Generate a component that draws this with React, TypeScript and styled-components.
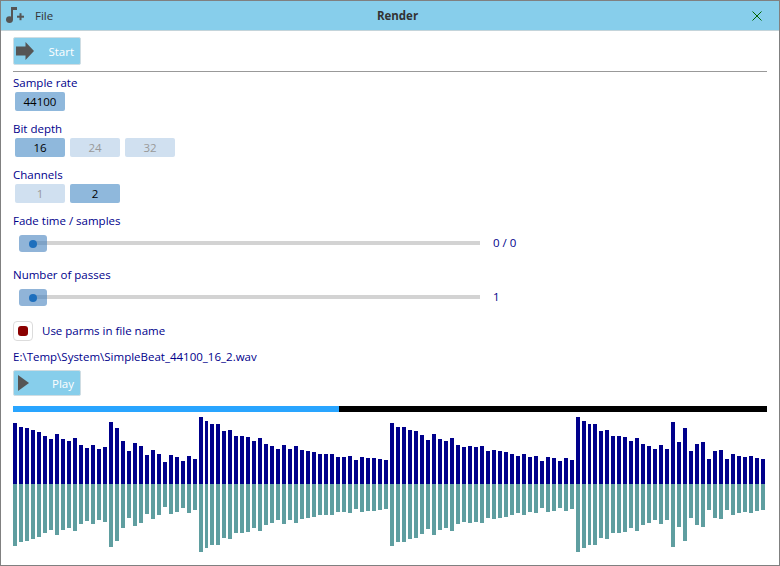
import styled, { createGlobalStyle } from 'styled-components'

const GlobalStyle = createGlobalStyle`
  html, body {
    margin: 0;
    padding: 0;
    background: #fff;
  }

  body {
    font-family: 'Open Sans', 'Noto Sans', sans-serif;
    font-size: 11.5px;
  }
`

const Window = styled.div`
  width: 780px;
  height: 566px;
  box-sizing: border-box;
  border: 1px solid #808080;
  background: #fff;
  overflow: hidden;
`

const TitleBar = styled.header`
  display: flex;
  align-items: center;
  height: 29px;
  padding: 0 17px 0 4px;
  background: #87ceeb;
  border-bottom: 1px solid #c4d4da;
  color: #333;
`

const MenuLabel = styled.span`
  margin-left: 10px;
  width: 40px;
`

const Title = styled.span`
  flex: 1;
  padding-right: 32px;
  text-align: center;
  font-weight: 700;
  color: #333;
`

const Content = styled.main`
  padding: 6px 12px 0;
`

const ActionButton = styled.button`
  display: flex;
  align-items: center;
  justify-content: space-between;
  width: 68px;
  height: ${({ $tall }: { $tall?: boolean }) => ($tall ? 28 : 26)}px;
  padding: 0 6px 0 2px;
  box-sizing: border-box;
  border: 1px solid #cfdde3;
  border-radius: 2px;
  background: #87ceeb;
  color: #fff;
  font: inherit;
`

const Divider = styled.hr`
  height: 1px;
  margin: 6px 0 3px;
  border: 0;
  background: #999;
`

const Section = styled.section`
  height: 46px;
`

const SliderSection = styled.section`
  height: 54px;
`

const Label = styled.div`
  height: 17px;
  line-height: 15px;
  color: #00008b;
`

const OptionRow = styled.div`
  display: flex;
  gap: 5px;
  padding-left: 2px;
`

const Option = styled.span<{ $active?: boolean }>`
  width: 50px;
  height: 19px;
  line-height: 19px;
  border-radius: 2px;
  text-align: center;
  background: ${({ $active }) => ($active ? '#8fb8dc' : '#d0e0f0')};
  color: ${({ $active }) => ($active ? '#000' : '#999')};
`

const SliderRow = styled.div`
  display: flex;
  align-items: center;
  height: 18px;
  margin-top: 4px;
  padding-left: 20px;
`

const Track = styled.div`
  position: relative;
  width: 447px;
  height: 4px;
  background: #d3d3d3;
`

const Thumb = styled.div`
  position: absolute;
  left: -14px;
  top: -6px;
  display: flex;
  align-items: center;
  justify-content: center;
  width: 28px;
  height: 17px;
  border-radius: 3px;
  background: rgba(70, 130, 190, 0.6);
`

const ThumbDot = styled.span`
  width: 8px;
  height: 8px;
  border-radius: 50%;
  background: #1e6fbd;
`

const SliderValue = styled.span`
  margin: -2px 0 0 13px;
  color: #00008b;
`

const CheckRow = styled.label`
  display: flex;
  align-items: center;
  gap: 9px;
  height: 20px;
  color: #00008b;
`

const CheckBox = styled.span`
  display: flex;
  align-items: center;
  justify-content: center;
  width: 20px;
  height: 20px;
  box-sizing: border-box;
  border: 1px solid #dcdcdc;
  border-radius: 4px;
`

const CheckMark = styled.span`
  width: 10px;
  height: 10px;
  border-radius: 3px;
  background: #8b0000;
`

const CheckText = styled.span`
  margin-top: -2px;
`

const FilePath = styled.div`
  height: 17px;
  line-height: 17px;
  margin: 7px 0 5px;
  color: #00008b;
`

const Progress = styled.div`
  display: flex;
  height: 6px;
  margin-top: 10px;
  background: #000;
`

const ProgressFill = styled.div`
  background: #29a5ff;
`

const Wave = styled.div`
  display: flex;
  flex-direction: column;
  margin-top: 5px;
`

const Channel = styled.div<{ $lower?: boolean }>`
  display: flex;
  height: ${({ $lower }) => ($lower ? 68 : 67)}px;
  align-items: ${({ $lower }) => ($lower ? 'flex-start' : 'flex-end')};
`

const BarSlot = styled.div`
  flex: 1;
  display: flex;
  align-items: inherit;
  height: 100%;
  padding-right: 2px;
`

const Bar = styled.div<{ $lower?: boolean }>`
  flex: 1;
  background: ${({ $lower }) => ($lower ? '#5f9ea0' : '#00008b')};
`

const levels = [
  61, 57, 56, 54, 52, 48, 45, 50, 45, 43, 46, 39, 36, 39, 35, 37, 62, 56, 43, 33, 41,
  38, 29, 34, 30, 22, 29, 27, 23, 28, 25, 67, 63, 60, 60, 53, 54, 48, 48, 47, 43, 46,
  40, 38, 35, 39, 35, 38, 34, 33, 32, 30, 30, 30, 27, 27, 28, 24, 27, 26, 26, 25, 24,
  61, 57, 57, 54, 53, 49, 44, 50, 45, 43, 46, 39, 37, 38, 37, 38, 33, 34, 33, 32, 30, 28,
  30, 27, 28, 23, 27, 26, 23, 26, 24, 67, 63, 60, 60, 53, 54, 48, 48, 47, 43, 46, 40, 38,
  35, 39, 35, 62, 42, 56, 33, 40, 42, 25, 33, 34, 25, 30, 28, 27, 28, 26, 25,
]

const NoteIcon = () => (
  <svg width="20" height="21" viewBox="0 0 20 21" fill="#555">
    <ellipse cx="4.5" cy="14.6" rx="3.5" ry="3.4" />
    <rect x="6" y="2" width="2" height="12.5" />
    <rect x="6" y="2" width="6" height="3" />
    <rect x="12" y="10.7" width="7" height="2" />
    <rect x="14.5" y="8.2" width="2" height="7" />
  </svg>
)

const CloseIcon = () => (
  <svg width="10" height="10" viewBox="0 0 10 10" stroke="#006400" strokeWidth="1" fill="none">
    <path d="M0.5 0.5 L9.5 9.5 M9.5 0.5 L0.5 9.5" />
  </svg>
)

const ArrowIcon = () => (
  <svg width="18" height="18" viewBox="0 0 18 18" fill="#555">
    <path d="M0 4.5 H9.5 V0 L18 9 L9.5 18 V13.5 H0 Z" />
  </svg>
)

const PlayIcon = () => (
  <svg width="13" height="16" viewBox="0 0 13 16" fill="#555">
    <path d="M2 0 L13 8 L2 16 Z" />
  </svg>
)

export default function App() {
  return (
    <Window>
      <GlobalStyle />
      <TitleBar>
        <NoteIcon />
        <MenuLabel>File</MenuLabel>
        <Title>Render</Title>
        <CloseIcon />
      </TitleBar>
      <Content>
        <ActionButton $tall>
          <ArrowIcon />
          Start
        </ActionButton>
        <Divider />
        <Section>
          <Label>Sample rate</Label>
          <OptionRow>
            <Option $active>44100</Option>
          </OptionRow>
        </Section>
        <Section>
          <Label>Bit depth</Label>
          <OptionRow>
            <Option $active>16</Option>
            <Option>24</Option>
            <Option>32</Option>
          </OptionRow>
        </Section>
        <Section>
          <Label>Channels</Label>
          <OptionRow>
            <Option>1</Option>
            <Option $active>2</Option>
          </OptionRow>
        </Section>
        <SliderSection>
          <Label>Fade time / samples</Label>
          <SliderRow>
            <Track>
              <Thumb>
                <ThumbDot />
              </Thumb>
            </Track>
            <SliderValue>0 / 0</SliderValue>
          </SliderRow>
        </SliderSection>
        <SliderSection>
          <Label>Number of passes</Label>
          <SliderRow>
            <Track>
              <Thumb>
                <ThumbDot />
              </Thumb>
            </Track>
            <SliderValue>1</SliderValue>
          </SliderRow>
        </SliderSection>
        <CheckRow>
          <CheckBox>
            <CheckMark />
          </CheckBox>
          <CheckText>Use parms in file name</CheckText>
        </CheckRow>
        <FilePath>E:\Temp\System\SimpleBeat_44100_16_2.wav</FilePath>
        <ActionButton>
          <PlayIcon />
          Play
        </ActionButton>
        <Progress>
          <ProgressFill style={{ width: `${(326 / 754) * 100}%` }} />
        </Progress>
        <Wave>
          <Channel>
            {levels.map((level, i) => (
              <BarSlot key={i}>
                <Bar style={{ height: level }} />
              </BarSlot>
            ))}
          </Channel>
          <Channel $lower>
            {levels.map((level, i) => (
              <BarSlot key={i}>
                <Bar $lower style={{ height: level + 1 }} />
              </BarSlot>
            ))}
          </Channel>
        </Wave>
      </Content>
    </Window>
  )
}
